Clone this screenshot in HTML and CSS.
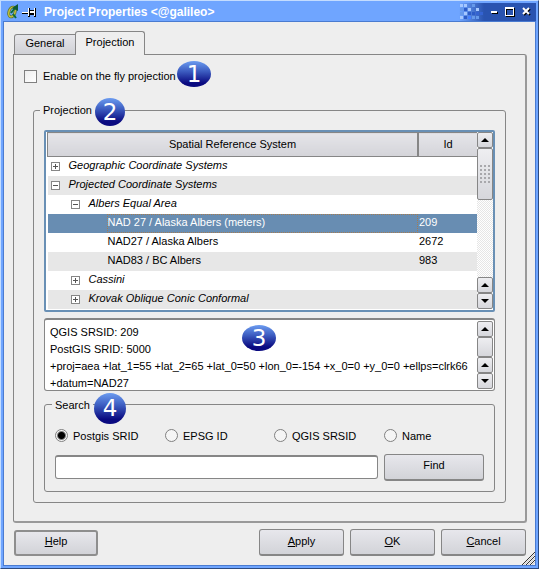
FILE: index.html
```html
<!DOCTYPE html>
<html lang="en">
<head>
<meta charset="utf-8">
<title>Project Properties &lt;@galileo&gt;</title>
<link rel="stylesheet" href="styles.css">
</head>
<body>
<div class="window">
  <header class="titlebar">
    <svg class="app-icon" width="12" height="15" viewBox="0 0 12 15" aria-hidden="true">
      <ellipse cx="5" cy="8" rx="3" ry="5" transform="rotate(18 5 8)" fill="none" stroke="#5f7430" stroke-width="3"/>
      <ellipse cx="5" cy="8" rx="3" ry="5" transform="rotate(18 5 8)" fill="none" stroke="#c2c23c" stroke-width="1.5"/>
      <path d="M4 9 8 4M6 10 9 14" stroke="#0c6a3c" stroke-width="2"/>
      <path d="M5 4 11 0 11 7Z" fill="#0c5a34"/>
    </svg>
    <svg class="pin-icon" width="16" height="11" viewBox="0 0 16 11" aria-hidden="true">
      <path d="M1 5h6v1H1z" fill="#fff"/><path d="M1 6h6v1H1z" fill="#000"/>
      <path d="M7 1h2v2h4V1h2v9h-2V8H9v2H7z" fill="#000"/>
      <path d="M7 1h1v8H7zM13 1h1v8h-1zM9 4h4v2H9z" fill="#fff"/>
    </svg>
    <h1>Project Properties &lt;@galileo&gt;</h1>
    <div class="controls">
      <svg class="pixels" width="24" height="16" viewBox="0 0 24 16" aria-hidden="true">
        <path fill="#a5c8ff" d="M1 0h3v3H1zM5 0h3v3H5zM9 4h3v3H9zM17 4h3v3h-3zM5 8h3v3H5zM1 12h3v3H1z"/>
        <path fill="#669aea" d="M13 0h3v3h-3zM1 4h3v3H1zM1 8h3v3H1zM13 12h3v3h-3zM17 12h3v3h-3z"/>
        <path fill="#2d5dc8" d="M5 4h3v3H5zM9 8h3v3H9zM13 8h3v3h-3zM5 12h3v3H5z"/>
        <path fill="#4682ff" d="M9 12h3v3H9z"/>
        <path fill="#3463d2" d="M21 8h3v3h-3zM17 8h3v3h-3z"/>
      </svg>
      <button type="button" aria-label="Minimize"><svg width="9" height="10" viewBox="0 0 9 10"><path d="M2 5h6v2H2z" fill="#000"/><path d="M1 4h6v2H1z" fill="#fff"/></svg></button>
      <button type="button" aria-label="Maximize"><svg width="11" height="10" viewBox="0 0 11 10" shape-rendering="crispEdges"><path fill="#000" fill-rule="evenodd" d="M1 1h9v9H1zM2 3v6h7V3z"/><path fill="#fff" fill-rule="evenodd" d="M0 0h9v9H0zM1 2v6h7V2z"/></svg></button>
      <button type="button" aria-label="Close"><svg width="9" height="10" viewBox="0 0 9 10"><path d="m2 2 6 6m0-6-6 6" stroke="#000" stroke-width="2"/><path d="m1 1 6 6m0-6-6 6" stroke="#fff" stroke-width="2"/></svg></button>
    </div>
  </header>

  <main class="dialog">
    <div class="tabs" role="tablist">
      <button type="button" class="tab" role="tab" aria-selected="false">General</button>
      <button type="button" class="tab tab-active" role="tab" aria-selected="true">Projection</button>
    </div>

    <section class="panel">
      <div class="fly-row">
        <input type="checkbox" id="fly"><label for="fly">Enable on the fly projection</label>
        <span class="badge badge-1">1</span>
      </div>

      <fieldset class="group projection">
        <legend>Projection<span class="badge badge-2">2</span></legend>

        <div class="tree">
          <table>
            <thead><tr><th>Spatial Reference System</th><th class="id-col">Id</th></tr></thead>
            <tbody>
              <tr class="node"><td><button type="button" class="toggle plus" aria-label="Expand"></button>Geographic Coordinate Systems</td><td></td></tr>
              <tr class="node"><td><button type="button" class="toggle" aria-label="Collapse"></button>Projected Coordinate Systems</td><td></td></tr>
              <tr class="node level-1"><td><button type="button" class="toggle" aria-label="Collapse"></button>Albers Equal Area</td><td></td></tr>
              <tr class="leaf selected"><td><span>NAD 27 / Alaska Albers (meters)</span></td><td>209</td></tr>
              <tr class="leaf"><td>NAD27 / Alaska Albers</td><td>2672</td></tr>
              <tr class="leaf"><td>NAD83 / BC Albers</td><td>983</td></tr>
              <tr class="node level-1"><td><button type="button" class="toggle plus" aria-label="Expand"></button>Cassini</td><td></td></tr>
              <tr class="node level-1"><td><button type="button" class="toggle plus" aria-label="Expand"></button>Krovak Oblique Conic Conformal</td><td></td></tr>
            </tbody>
          </table>
          <div class="scrollbar">
            <button type="button" class="up" aria-label="Scroll up"></button>
            <div class="thumb"><i class="grip"></i></div>
            <div class="track"></div>
            <button type="button" class="up" aria-label="Scroll up"></button>
            <button type="button" class="down" aria-label="Scroll down"></button>
          </div>
        </div>

        <div class="details">
          <textarea readonly aria-label="Projection parameters" rows="4">QGIS SRSID: 209
PostGIS SRID: 5000
+proj=aea +lat_1=55 +lat_2=65 +lat_0=50 +lon_0=-154 +x_0=0 +y_0=0 +ellps=clrk66 +datum=NAD27</textarea>
          <div class="scrollbar">
            <button type="button" class="up" aria-label="Scroll up"></button>
            <div class="thumb thumb-fill"></div>
            <button type="button" class="up" aria-label="Scroll up"></button>
            <button type="button" class="down" aria-label="Scroll down"></button>
          </div>
          <span class="badge badge-3">3</span>
        </div>

        <fieldset class="group search">
          <legend>Search<span class="badge badge-4">4</span></legend>
          <div class="radios">
            <label><input type="radio" name="by" checked>Postgis SRID</label>
            <label><input type="radio" name="by">EPSG ID</label>
            <label><input type="radio" name="by">QGIS SRSID</label>
            <label><input type="radio" name="by">Name</label>
          </div>
          <div class="find-row">
            <input type="text" aria-label="Search text">
            <button type="button" class="btn">Find</button>
          </div>
        </fieldset>
      </fieldset>
    </section>

    <footer class="actions">
      <button type="button" class="btn help"><span><u>H</u>elp</span></button>
      <button type="button" class="btn"><span><u>A</u>pply</span></button>
      <button type="button" class="btn"><span><u>O</u>K</span></button>
      <button type="button" class="btn"><span><u>C</u>ancel</span></button>
    </footer>
    <svg class="resize" width="13" height="13" viewBox="0 0 13 13" aria-hidden="true">
      <path d="M0 13 13 0M4 13 13 4M8 13 13 8" stroke="#333" stroke-width="1"/>
      <path d="M2 13 13 2M6 13 13 6M10 13 13 10" stroke="#ccc" stroke-width="1"/>
    </svg>
  </main>
</div>
</body>
</html>
```
FILE: styles.css
```css
* { box-sizing: border-box; }

body {
  margin: 0;
  font: 11px/14px "Liberation Sans", Arial, sans-serif;
  color: #000;
}

button, input, textarea { font: inherit; color: inherit; margin: 0; padding: 0; }

.window {
  display: flex;
  flex-direction: column;
  min-height: 100vh;
  padding: 0 2px 2px;
  background: #6fa5ff;
  border: 1px solid #c3dcff;
  border-right-color: #2c4b80;
  border-bottom-color: #2c4b80;
}

/* Title bar */
.titlebar {
  display: flex;
  align-items: center;
  height: 20px;
  padding-left: 4px;
  gap: 2px;
  color: #fff;
}
.pin-icon { margin-top: 2px; }
.titlebar h1 {
  flex: 1;
  margin: 0 0 0 5px;
  padding-top: 2px;
  font: bold 12px/14px "Liberation Sans", Arial, sans-serif;
}
.controls {
  display: flex;
  align-items: center;
  align-self: stretch;
  gap: 6px;
  margin-top: 2px;
  padding-right: 5px;
  background: linear-gradient(90deg, #6fa5ff, #2953b0 25px);
}
.controls button {
  display: flex;
  border: 0;
  background: none;
}
.pixels { margin-right: 1px; }

/* Dialog body */
.dialog {
  position: relative;
  flex: 1;
  display: flex;
  flex-direction: column;
  padding: 9px 8px 9px 9px;
  background: #eee;
  border: 1px solid #4a7bd0;
}

.tabs {
  display: flex;
  align-items: flex-end;
  padding-left: 1px;
}
.tab {
  height: 20px;
  width: 62px;
  padding-bottom: 3px;
  border: 1px solid #868686;
  border-bottom: 0;
  border-radius: 3px 0 0 0;
  background: linear-gradient(#e6e6ea, #d0d1d6);
}
.tab-active {
  position: relative;
  height: 24px;
  width: 70px;
  margin: 0 0 -1px -1px;
  border-radius: 3px 3px 0 0;
  background: #eee;
}

.panel {
  flex: 1;
  display: flex;
  flex-direction: column;
  padding: 14px 19px 18px;
  border: 1px solid #868686;
  border-right-width: 2px;
  border-bottom-width: 2px;
  border-radius: 0 3px 3px 3px;
  border-right-color: #999;
  border-bottom-color: #999;
}

.fly-row {
  position: relative;
  display: flex;
  align-items: center;
  gap: 6px;
  height: 14px;
  margin-left: -9px;
}
input[type="checkbox"] {
  appearance: none;
  width: 13px;
  height: 13px;
  border: 1px solid #808080;
  background: linear-gradient(135deg, #eee, #fff);
}

.group {
  min-width: 0;
  margin: 0;
  border: 1px solid #868686;
  border-radius: 3px;
}
.group legend { position: relative; padding: 0 3px; }

.projection {
  flex: 1;
  margin-top: 20px;
  padding: 13px 10px 10px;
}
.projection > legend { margin-left: -4px; }

/* Coordinate system tree */
.tree {
  display: flex;
  align-items: stretch;
  padding: 0 0 1px 1px;
  border: 2px solid #6990b5;
  border-radius: 2px;
  background: #fff;
}
.tree table {
  flex: 1;
  table-layout: fixed;
  border-collapse: collapse;
}
.tree th {
  height: 24px;
  padding: 0 0 2px;
  font-weight: normal;
  border: 1px solid #868686;
  border-right-width: 2px;
  background: linear-gradient(#e5e5e9, #d4d4d9);
}
.tree th.id-col { width: 59px; border-right-width: 0; }
.tree td { height: 19px; padding: 0 0 2px; white-space: nowrap; }
.tree td:last-child { padding-left: 1px; }
.tree tbody tr:nth-child(even) { background: #e7e7e7; }
.node td:first-child { padding-left: 3px; font-style: italic; }
.level-1 td:first-child { padding-left: 23px; }
.leaf td:first-child { padding-left: 60px; }
.tree tbody tr.selected { background: #688db2; color: #fff; }
.tree .selected td:first-child { padding: 0 0 0 59px; }
.selected span {
  display: block;
  height: 19px;
  border: 1px dotted #a67c50;
}

.toggle {
  width: 9px;
  height: 9px;
  margin-right: 9px;
  vertical-align: -1px;
  border: 1px solid #868686;
  background: linear-gradient(#555, #555) center / 5px 1px no-repeat #fff;
}
.toggle.plus {
  background:
    linear-gradient(#555, #555) center / 5px 1px no-repeat,
    linear-gradient(#555, #555) center / 1px 5px no-repeat #fff;
}

/* Scrollbars */
.scrollbar {
  display: flex;
  flex-direction: column;
  width: 16px;
}
.scrollbar button, .thumb {
  display: flex;
  align-items: center;
  justify-content: center;
  flex: none;
  height: 16px;
  border: 1px solid #868686;
  border-radius: 2px;
  background: linear-gradient(#eeeef1, #d6d7dc);
}
.scrollbar button::before {
  content: "";
  border: 4px solid transparent;
}
.scrollbar .up::before { border-top: 0; border-bottom-color: #000; }
.scrollbar .down::before { border-bottom: 0; border-top-color: #000; }
.scrollbar .thumb { height: 52px; }
.scrollbar .thumb-fill { flex: 1; height: auto; }
.track {
  flex: 1;
  background: repeating-conic-gradient(#e6e6e6 0 25%, #fff 0 50%) 0 0 / 2px 2px;
}
.grip {
  width: 11px;
  height: 19px;
  background: radial-gradient(circle at 1px 1px, #a8a8ac 1px, transparent 1px) 0 0 / 4px 4px;
}

/* Projection details */
.details {
  position: relative;
  display: flex;
  margin-top: 6px;
  padding: 1px;
  border: 1px solid #868686;
  border-top-width: 2px;
  border-radius: 3px;
  background: #fff;
}
.details textarea {
  flex: 1;
  min-width: 0;
  height: 68px;
  padding: 3px 4px 0;
  border: 0;
  resize: none;
  overflow: hidden;
  line-height: 17px;
  background: none;
}

/* Search */
.search {
  margin-top: 7px;
  padding: 17px 10px 10px;
}
.search legend { margin-left: -3px; }
.radios {
  display: grid;
  grid-template-columns: 110px 109px 110px 1fr;
}
.radios label { display: flex; align-items: center; gap: 5px; }
input[type="radio"] {
  appearance: none;
  width: 13px;
  height: 13px;
  border: 1px solid #808080;
  border-radius: 50%;
  background: #f5f5f5;
}
input[type="radio"]:checked {
  background: radial-gradient(circle, #000 3px, #f5f5f5 5px);
}
.find-row {
  display: flex;
  align-items: center;
  gap: 6px;
  margin-top: 11px;
}
.find-row input {
  flex: 1;
  min-width: 0;
  height: 24px;
  border: 1px solid #868686;
  border-top-width: 2px;
  border-radius: 3px;
  background: #fff;
}
.find-row .btn { width: 100px; }

.btn {
  width: 85px;
  height: 27px;
  padding-bottom: 3px;
  border: 1px solid #868686;
  border-bottom-width: 2px;
  border-radius: 3px;
  background: linear-gradient(#e7e7ec, #d2d3d8);
}

.actions {
  display: flex;
  align-items: center;
  gap: 6px;
  margin-top: 6px;
  padding: 0 1px;
}
.help {
  height: 26px;
  width: 84px;
  margin-right: auto;
  border-width: 2px;
  border-color: #8e8e8e;
}
.resize {
  position: absolute;
  right: 0;
  bottom: 0;
}

/* Numbered callouts */
.badge {
  position: absolute;
  z-index: 1;
  display: flex;
  align-items: center;
  justify-content: center;
  width: 34px;
  height: 26px;
  border-radius: 50%;
  background: linear-gradient(#6c9cf0, #3c5cc0 40%, #0a0a80 85%);
  color: #fff;
  font: 23px/24px "DejaVu Sans", sans-serif;
}
.badge-1 { left: 153px; top: -8px; }
.badge-2 { left: 55px; top: -5px; width: 30px; height: 28px; }
.badge-3 { left: 197px; top: 5px; }
.badge-4 { left: 42px; top: -5px; width: 32px; height: 31px; }
```
